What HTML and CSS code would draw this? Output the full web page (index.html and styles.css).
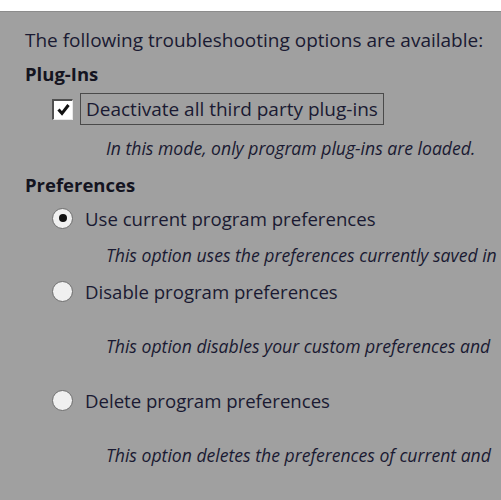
FILE: index.html
```html
<!DOCTYPE html>
<html lang="en">
<head>
    <meta charset="UTF-8">
    <meta name="viewport" content="width=device-width, initial-scale=1.0">
    <title>Troubleshooting Options</title>
    <link rel="stylesheet" href="styles.css">
</head>
<body>
    <div class="titlebar"></div>

    <div class="panel">
        <p class="intro">The following troubleshooting options are available:</p>

        <h2 class="group first">Plug-Ins</h2>
        <div class="option check-row">
            <span class="checkbox">
                <svg width="13" height="13" viewBox="0 0 13 13">
                    <path d="M1.5 6.5 L5 10.5 L11.5 2" fill="none" stroke="#111" stroke-width="3" stroke-linejoin="miter"/>
                </svg>
            </span>
            <span class="focus-label">Deactivate all third party plug-ins</span>
        </div>
        <p class="note note-plugins">In this mode, only program plug-ins are loaded.</p>

        <h2 class="group">Preferences</h2>
        <div class="option radio-row r1">
            <span class="radio checked"></span>
            <span class="label">Use current program preferences</span>
        </div>
        <p class="note n1">This option uses the preferences currently saved in</p>

        <div class="option radio-row r2">
            <span class="radio"></span>
            <span class="label">Disable program preferences</span>
        </div>
        <p class="note n2">This option disables your custom preferences and</p>

        <div class="option radio-row r3">
            <span class="radio"></span>
            <span class="label">Delete program preferences</span>
        </div>
        <p class="note n3">This option deletes the preferences of current and</p>
    </div>
</body>
</html>
```

FILE: styles.css
```css
body {
    margin: 0;
    background-color: #a0a0a0;
    color: #1a1a32;
    font-family: "Open Sans", "Noto Sans", sans-serif;
    font-size: 19px;
    overflow: hidden;
}
.titlebar {
    height: 11px;
    background-color: #ffffff;
    border-bottom: 1px solid #8c8c8c;
}
.panel {
    padding-left: 25px;
    white-space: nowrap;
}
p, h2 {
    margin: 0;
    line-height: 24px;
}
.intro {
    margin-top: 16px;
}
.group {
    font-size: 18.5px;
    font-weight: bold;
    color: #141420;
}
.group.first {
    margin-top: 10px;
}
.option {
    display: flex;
    align-items: center;
    padding-left: 27px;
}
.check-row {
    margin-top: 7px;
    height: 32px;
}
.checkbox {
    width: 18px;
    height: 18px;
    background-color: #ffffff;
    border-top: 2px solid #505050;
    border-left: 2px solid #505050;
    border-right: 1px solid #e8e8e8;
    border-bottom: 1px solid #e8e8e8;
    display: flex;
    align-items: center;
    justify-content: center;
    margin-right: 7px;
}
.focus-label {
    border: 1px solid #4a4a4a;
    height: 30px;
    line-height: 30px;
    padding: 0 5px;
}
.note {
    font-style: italic;
    font-size: 17.6px;
    padding-left: 81px;
}
.note-plugins {
    margin-top: 11px;
}
.group:not(.first) {
    margin-top: 13px;
}
.radio-row {
    height: 24px;
}
.radio-row .label {
    font-size: 18.6px;
}
.r1 { margin-top: 9px; }
.r2 { margin-top: 12px; }
.r3 { margin-top: 30px; }
.n1 { margin-top: 13px; }
.n2 { margin-top: 31px; }
.n3 { margin-top: 31px; }
.radio {
    width: 21px;
    height: 21px;
    border-radius: 50%;
    background-color: #f0f0f0;
    border: 1px solid #6e6e6e;
    box-sizing: border-box;
    margin-right: 12px;
    display: flex;
    align-items: center;
    justify-content: center;
}
.radio.checked::after {
    content: "";
    width: 8px;
    height: 8px;
    border-radius: 50%;
    background-color: #111111;
}
```
